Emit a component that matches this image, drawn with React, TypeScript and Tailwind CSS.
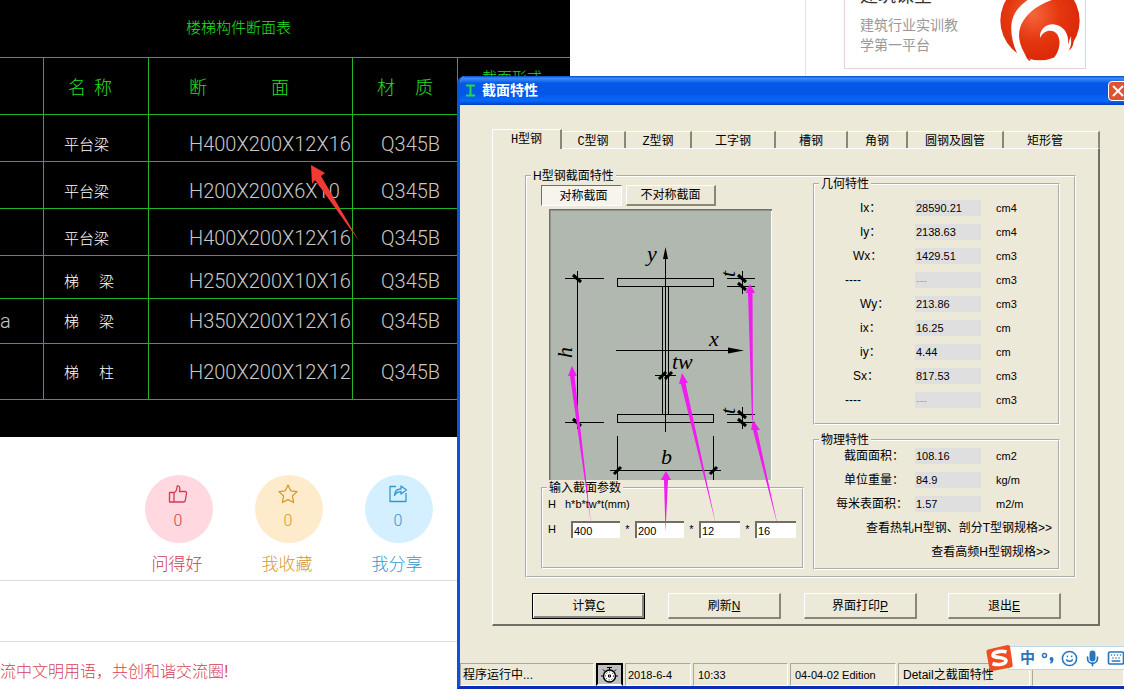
import React from "react";
import { Mic, Smile, Keyboard } from "lucide-react";

const sheetRows = [
  { mark: "", name: "平台梁", size: "H400X200X12X16", grade: "Q345B", cls: "h-[47px] align-bottom" },
  { mark: "", name: "平台梁", size: "H200X200X6X10", grade: "Q345B", cls: "h-[47px] align-bottom" },
  { mark: "", name: "平台梁", size: "H400X200X12X16", grade: "Q345B", cls: "h-[47px] align-bottom" },
  { mark: "", name: "梯 梁", size: "H250X200X10X16", grade: "Q345B", cls: "h-[43px] align-bottom" },
  { mark: "a", name: "梯 梁", size: "H350X200X12X16", grade: "Q345B", cls: "h-[45px] align-middle" },
  { mark: "", name: "梯 柱", size: "H200X200X12X12", grade: "Q345B", cls: "h-[56px] align-middle" },
];

function Sheet() {
  const line = "border-[#22b422]";
  return (
    <div className="relative h-[437px] w-[570px] overflow-hidden bg-black">
      <div className="pl-[186px] pt-3 font-['Noto_Sans_CJK_SC',sans-serif] text-[15px] font-light leading-[30px] text-[#22e022]">
        <div className="h-[45px]">楼梯构件断面表</div>
      </div>
      <table className={`w-full table-fixed border-separate border-spacing-0 border-t ${line}`}>
        <colgroup>
          <col className="w-[44px]" />
          <col className="w-[105px]" />
          <col className="w-[204px]" />
          <col className="w-[105px]" />
          <col />
        </colgroup>
        <thead className="font-['Noto_Sans_CJK_SC',sans-serif] text-[18px] text-[#22e022]">
          <tr>
            <th className={`h-[57px] border-b border-r ${line}`} />
            <th className={`border-b border-r pl-6 text-left font-light ${line}`}>
              <div className="flex gap-2"><span>名</span><span>称</span></div>
            </th>
            <th className={`border-b border-r pl-10 text-left font-light ${line}`}>
              <div className="flex gap-16"><span>断</span><span>面</span></div>
            </th>
            <th className={`border-b border-r pl-6 text-left font-light ${line}`}>
              <div className="flex gap-5"><span>材</span><span>质</span></div>
            </th>
            <th className={`border-b pl-6 pt-2 text-left align-top text-[15px] font-light ${line}`}>截面形式</th>
          </tr>
        </thead>
        <tbody className="font-[Roboto,'Noto_Sans_CJK_SC',sans-serif] text-[20px] font-light leading-[34px] text-[#c8c8c8]">
          {sheetRows.map((r, i) => (
            <tr key={i}>
              <td className={`border-b border-r ${line} ${r.cls}`}>{r.mark}</td>
              <td className={`whitespace-nowrap border-b border-r pl-5 font-['Noto_Sans_CJK_SC',sans-serif] text-[15px] text-white ${line} ${r.cls}`}>
                {r.name.includes(" ") ? (
                  <div className="flex gap-5">
                    <span>{r.name.split(" ")[0]}</span>
                    <span>{r.name.split(" ")[1]}</span>
                  </div>
                ) : (
                  r.name
                )}
              </td>
              <td className={`whitespace-nowrap border-b border-r pl-10 ${line} ${r.cls}`}>{r.size}</td>
              <td className={`border-b border-r pl-7 ${line} ${r.cls}`}>{r.grade}</td>
              <td className={r.cls} />
            </tr>
          ))}
        </tbody>
      </table>
      <svg className="absolute left-[300px] top-[155px]" width="70" height="90" viewBox="300 155 70 90" aria-hidden="true">
        <path d="M311 165 L325 173 L321 176 L359 241 L315 180 L312 184 Z" fill="#f23a35" />
      </svg>
    </div>
  );
}

function Reaction({ tone, disc, label, children }: { tone: string; disc: string; label: string; children: React.ReactNode }) {
  return (
    <button className={`flex flex-col items-center ${tone}`}>
      <span className={`flex h-[68px] w-[68px] flex-col items-center rounded-full pr-0.5 pt-2 ${disc}`}>
        {children}
        <span className="mt-1 font-[Roboto,sans-serif] text-[16px] font-light leading-6">0</span>
      </span>
      <span className="mt-3 pr-1 text-[17px] font-light leading-5">{label}</span>
    </button>
  );
}

function PageBehind() {
  return (
    <div className="flex items-start">
      <main className="w-[805px] shrink-0">
        <Sheet />
        <div className="flex gap-[42px] border-b border-[#dddddd] pb-[5px] pl-[145px] pt-[38px]">
          <Reaction tone="text-[#d23a55]" disc="bg-[#ffd9df]" label="问得好">
            <svg width="20" height="22" viewBox="0 0 20 22" fill="none" stroke="currentColor" strokeWidth="1.3" strokeLinejoin="round">
              <path d="M1.500 9.500h4.500v9.500H1.500zM6 10c2.300-1.500 3-3.500 3.200-7 2.200-.5 3.300 1.500 2.200 5.500h5.600c1.200 0 1.700.8 1.500 2l-1.200 7c-.3 1-.8 1.500-1.800 1.500H6" />
            </svg>
          </Reaction>
          <Reaction tone="text-[#d8992c]" disc="bg-[#feebcb]" label="我收藏">
            <svg width="20" height="22" viewBox="0 0 20 22" fill="none" stroke="currentColor" strokeWidth="1.3" strokeLinejoin="round">
              <path d="M10 2l2.700 5.800 6.300.8-4.600 4.400 1.200 6.500L10 16.700 4.400 19.500l1.200-6.500L1 8.600l6.300-.8z" />
            </svg>
          </Reaction>
          <Reaction tone="text-[#3596d0]" disc="bg-[#d4efff]" label="我分享">
            <svg width="20" height="22" viewBox="0 0 20 22" fill="none" stroke="currentColor" strokeWidth="1.3" strokeLinejoin="round">
              <path d="M8 3.500H2v15h16V10M6.500 12.500c.2-4 2.500-6.500 6.500-6.500V3l5.500 4L13 11V8.600c-3 0-5 1.200-6.500 3.900z" />
            </svg>
          </Reaction>
        </div>
        <div className="h-[61px] border-b border-[#dddddd]" />
        <p className="pt-[18px] text-[16px] font-light leading-6 text-[#d6415a]">流中文明用语，共创和谐交流圈!</p>
      </main>
      <aside className="border-l border-[#e4e4e4] pb-2 pl-[38px]">
        <div className="flex h-[69px] w-[242px] justify-between border border-t-0 border-[#e6d3d6] pl-[15px] pr-1">
          <div>
            <h2 className="-mt-4 text-[18px] leading-6 text-[#333333]">建筑课堂</h2>
            <p className="mt-[7px] w-[105px] text-[14px] leading-5 text-[#999999]">建筑行业实训教学第一平台</p>
          </div>
          <svg className="-mt-5 shrink-0" width="82" height="82" viewBox="479 -60 246 246" aria-hidden="true">
            <defs>
              <radialGradient id="ball" cx="0.42" cy="0.42" r="0.55">
                <stop offset="0" stopColor="#f4663c" />
                <stop offset="0.6" stopColor="#e5370f" />
                <stop offset="1" stopColor="#dd2a0b" />
              </radialGradient>
            </defs>
            <circle cx="602" cy="62" r="119" fill="url(#ball)" />
            <path d="M660 -45 C600 -30 560 0 540 22 C512 50 506 100 534 162 L552 186 L572 184 C536 138 530 96 552 62 C574 28 610 8 655 -6 C680 -14 690 -20 700 -12Z" fill="#fff" />
            <path d="M602 114 C600 88 620 72 642 73 C672 76 690 100 686 134 L694 108 L704 128 L712 130 L690 186 L630 186 C658 166 668 130 655 105 C645 88 614 86 602 114Z" fill="#fff" />
            <path d="M692 106 C698 124 696 138 688 152 C698 146 702 136 703 124 Z M558 158 C562 168 568 176 576 180 L569 182 C562 175 558 168 558 158Z" fill="#dd2b10" />
          </svg>
        </div>
      </aside>
    </div>
  );
}

const tabs = [
  { label: "H型钢", cls: "h-5 w-[70px] -mb-px bg-[#ece9d8] border-l relative" },
  { label: "C型钢", cls: "h-[17px] w-[64px] pt-0.5" },
  { label: "Z型钢", cls: "h-[17px] w-[66px] pt-0.5" },
  { label: "工字钢", cls: "h-[17px] w-[84px] pt-0.5" },
  { label: "槽钢", cls: "h-[17px] w-[72px] pt-0.5" },
  { label: "角钢", cls: "h-[17px] w-[60px] pt-0.5" },
  { label: "圆钢及圆管", cls: "h-[17px] w-[96px] pt-0.5" },
  { label: "矩形管", cls: "h-[17px] w-[96px] pt-0.5 pr-3" },
];

const geometry = [
  { label: "Ix：", value: "28590.21", unit: "cm4", pad: "pl-[45px]" },
  { label: "Iy：", value: "2138.63", unit: "cm4", pad: "pl-[45px]" },
  { label: "Wx：", value: "1429.51", unit: "cm3", pad: "pl-[38px]" },
  { label: "----", value: "---", unit: "cm3", pad: "pl-[30px]" },
  { label: "Wy：", value: "213.86", unit: "cm3", pad: "pl-[45px]" },
  { label: "ix：", value: "16.25", unit: "cm", pad: "pl-[45px]" },
  { label: "iy：", value: "4.44", unit: "cm", pad: "pl-[45px]" },
  { label: "Sx：", value: "817.53", unit: "cm3", pad: "pl-[38px]" },
  { label: "----", value: "---", unit: "cm3", pad: "pl-[30px]" },
];

const physics = [
  { label: "截面面积：", value: "108.16", unit: "cm2", pad: "pl-[29px]" },
  { label: "单位重量：", value: "84.9", unit: "kg/m", pad: "pl-[29px]" },
  { label: "每米表面积：", value: "1.57", unit: "m2/m", pad: "pl-[21px]" },
];

type Row = { label: string; value: string; unit: string; pad: string };

function Readout({ row, id }: { row: Row; id: string }) {
  return (
    <div className="flex h-6 items-center">
      <label htmlFor={id} className={`w-[100px] shrink-0 whitespace-nowrap ${row.pad}`}>{row.label}</label>
      <input
        id={id}
        readOnly
        value={row.value}
        className={`h-4 w-[66px] bg-[#e0dfe0] pl-px text-[11px] leading-4 outline-none ${row.value === "---" ? "text-[#a5a5a5]" : "text-black"}`}
      />
      <span className="pl-[15px] text-[11px]">{row.unit}</span>
    </div>
  );
}

const group = "min-w-0 border-2 border-white [border-style:groove]";
const legend = "ml-1 px-0.5 leading-[14px]";
const raised = "border-l border-t border-r-2 border-b-2 border-l-white border-t-white border-r-[#8a8778] border-b-[#8a8778]";

function Diagram() {
  return (
    <svg className="ml-2 mt-[3px] block h-[271px] w-[223px]" viewBox="549 209 223 271" role="img" aria-label="H型钢截面">
      <rect x="549" y="209" width="223" height="271" fill="#b0b8b0" />
      <path d="M549.5 480V210M549 209.500H772" stroke="#6f7169" strokeWidth="2" fill="none" />
      <path d="M771.500 211V480" stroke="#fff" fill="none" />
      <g stroke="#000" strokeWidth="1" fill="none" shapeRendering="crispEdges">
        <rect x="617.5" y="278.5" width="96" height="8" />
        <rect x="617.5" y="414.5" width="96" height="8" />
        <path d="M662.500 286V414M668.500 286V414M665.500 250V432" />
        <path d="M616 350.500H735M565 278.500H604M565 422.500H604M577.500 271V429" />
        <path d="M727 278.500H755M727 286.500H755M742.500 271V294M727 414.500H755M727 422.500H755M742.500 407V429" />
        <path d="M655 375.500H676M617.500 436V480M713.500 436V480M610 470.500H721" />
      </g>
      <path d="M665.500 247L668 259H663ZM744 350.500L728 347.500V353.500Z" />
      <path
        d="M573 275l8 7M573 419l8 7M738 275l8 7M738 283l8 7M738 411l8 7M738 419l8 7M659 379l7-7M665 379l7-7M614 474l7-7M710 474l7-7"
        stroke="#000"
        strokeWidth="3"
      />
      <g className="font-['Liberation_Serif',serif] text-[22px] italic">
        <text x="647" y="261">y</text>
        <text x="709" y="346">x</text>
        <text x="672" y="369">tw</text>
        <text x="661" y="464">b</text>
        <text transform="translate(572 358) rotate(-90)">h</text>
        <text transform="translate(735 277) rotate(-90)">t</text>
        <text transform="translate(735 414) rotate(-90)">t</text>
      </g>
    </svg>
  );
}

function Pointers() {
  return (
    <svg className="pointer-events-none absolute left-0 top-0" width="263" height="384" viewBox="541 185 263 384" aria-hidden="true">
      <g fill="#f01cf0">
        <path d="M572 366L577 376H574.500L591 524L570 376H568Z" />
        <path d="M666 471L671 480H668L665.500 532L664 480H661Z" />
        <path d="M682 373L688 383H685.500L716 525L681 384H679Z" />
        <path d="M750 284L755 293H752.500L753 420H752L748 293H745.500Z" />
        <path d="M753 420L760 430H757L778 527L753 430H751Z" />
      </g>
    </svg>
  );
}

const sizeFields = [
  { name: "h", value: "400", cls: "w-[49px]" },
  { name: "b", value: "200", cls: "w-[49px]" },
  { name: "tw", value: "12", cls: "w-[41px]" },
  { name: "t", value: "16", cls: "w-[41px]" },
];

function Tool({ text, hot, cls }: { text: string; hot: string; cls: string }) {
  return (
    <button className={`h-[26px] w-[113px] ${cls}`}>
      {text}
      <span className="underline">{hot}</span>
    </button>
  );
}

function Dialog() {
  const cell = "h-[23px] shrink-0 whitespace-nowrap border border-b-white border-l-[#aca899] border-r-white border-t-[#aca899] leading-[22px]";
  return (
    <section
      role="dialog"
      aria-label="截面特性"
      className="absolute left-[457px] right-0 top-[76px] overflow-hidden rounded-tl-lg border-b-[3px] border-l-[3px] border-b-[#0a2fb5] border-l-[#0a53dd] bg-[#ece9d8] text-[12px] text-black"
    >
      <header className="-ml-[3px] flex h-[29px] items-center bg-[linear-gradient(#0a48c8,#3c8cf8_8%,#0458e8_25%,#0456e6_60%,#0668fc_85%,#0340c0)] pl-2">
        <svg width="11" height="13" viewBox="0 0 11 13" fill="none" stroke="#16e04c" strokeWidth="2" aria-hidden="true">
          <path d="M1 1.500H10M1 11.500H10M5.500 1V12" />
        </svg>
        <h1 className="ml-1.5 flex-1 text-[14px] font-bold text-white">截面特性</h1>
        <button aria-label="关闭" className="-mr-1 flex h-5 w-5 items-center justify-center rounded-sm border border-white bg-[#dd5230]">
          <svg width="12" height="12" viewBox="0 0 12 12" stroke="#fff" strokeWidth="2"><path d="M1 1L11 11M11 1L1 11" /></svg>
        </button>
      </header>

      <div className="pl-8 pr-6 pt-6">
        <div role="tablist" className="flex items-end font-['Liberation_Mono','Noto_Sans_CJK_SC',monospace]">
          {tabs.map((t, i) => (
            <button
              key={t.label}
              role="tab"
              aria-selected={i === 0}
              className={`box-border whitespace-nowrap border-r-2 border-t border-r-[#8a8778] border-l-white border-t-white leading-4 ${t.cls}`}
            >
              {t.label}
            </button>
          ))}
        </div>

        <div role="tabpanel" className="border-b-2 border-l border-r-2 border-t border-b-[#716f64] border-l-white border-r-[#716f64] border-t-white pb-[5px] pl-8 pr-[22px] pt-5">
          <fieldset className={`${group} pb-1.5`}>
            <legend className={legend}>H型钢截面特性</legend>
            <div className="flex gap-[9px] px-3.5">
              <div className="relative mt-0.5 w-[263px] shrink-0">
                <div className="flex gap-1">
                  <button aria-pressed="true" className="h-[21px] w-[81px] border border-b-white border-l-[#716f64] border-r-white border-t-[#716f64] bg-[#f6f4ec] pl-1">对称截面</button>
                  <button aria-pressed="false" className={`h-[21px] w-[90px] ${raised}`}>不对称截面</button>
                </div>
                <Diagram />
                <fieldset className={`${group} mt-px h-[88px]`}>
                  <legend className={legend}>输入截面参数</legend>
                  <div className="flex h-[18px] items-center pl-[5px] text-[11px]">
                    <span className="w-[17px]">H</span>
                    <span>h*b*tw*t(mm)</span>
                  </div>
                  <div className="mt-2 flex items-center pl-[5px] text-[11px]">
                    <span className="w-[23px]">H</span>
                    {sizeFields.map((f, i) => (
                      <React.Fragment key={f.name}>
                        {i > 0 && <span className="w-[15px] text-center">*</span>}
                        <input
                          aria-label={f.name}
                          defaultValue={f.value}
                          className={`h-[17px] border-l-2 border-t-2 border-l-[#716f64] border-t-[#716f64] bg-white pl-px leading-[15px] outline-none ${f.cls}`}
                        />
                      </React.Fragment>
                    ))}
                  </div>
                </fieldset>
                <Pointers />
              </div>

              <div className="-mt-1.5 min-w-0 flex-1">
                <fieldset className={`${group} pb-[11px]`}>
                  <legend className={legend}>几何特性</legend>
                  <div className="pt-[5px]">
                    {geometry.map((r, i) => <Readout key={i} row={r} id={`geo${i}`} />)}
                  </div>
                </fieldset>
                <fieldset className={`${group} mt-2 pb-1`}>
                  <legend className={legend}>物理特性</legend>
                  <div className="-mt-[3px]">
                    {physics.map((r, i) => <Readout key={i} row={r} id={`phy${i}`} />)}
                    <div className="flex h-6 items-center justify-end whitespace-nowrap pr-1.5"><a href="#hot">查看热轧H型钢、剖分T型钢规格&gt;&gt;</a></div>
                    <div className="flex h-6 items-center justify-end whitespace-nowrap pr-2"><a href="#hf">查看高频H型钢规格&gt;&gt;</a></div>
                  </div>
                </fieldset>
              </div>
            </div>
          </fieldset>
          <div className="mt-[15px] flex gap-[23px] pl-[7px]">
            <Tool text="计算" hot="C" cls="border border-black shadow-[inset_1px_1px_#fff,inset_-2px_-2px_#8a8778]" />
            <Tool text="刷新" hot="N" cls={raised} />
            <Tool text="界面打印" hot="P" cls={raised} />
            <Tool text="退出" hot="E" cls={`ml-2 ${raised}`} />
          </div>
        </div>
      </div>

      <footer className="mt-[37px] flex gap-0.5">
        <div className={`w-[134px] pl-0.5 ${cell}`}>程序运行中...</div>
        <div className="flex h-[23px] w-[27px] shrink-0 items-center justify-center border-2 border-b-white border-l-black border-r-black border-t-black bg-[#c0c0c0]">
          <svg width="17" height="18" viewBox="0 0 17 18" fill="none" stroke="#000" aria-hidden="true">
            <circle cx="8.5" cy="10" r="6" fill="#fff" strokeWidth="1.5" />
            <circle cx="8.5" cy="10" r="4" strokeDasharray="1 2" />
            <path d="M6 1.500H11M8.500 1V4M2 3.500L4 5.500M15 3.500L13 5.500M0 10H2.500M14.500 10H17M7.500 9h2v2h-2z" />
          </svg>
        </div>
        <div className={`w-[66px] pl-0.5 text-[11px] ${cell}`}>2018-6-4</div>
        <div className={`w-[95px] pl-1 text-[11px] ${cell}`}>10:33</div>
        <div className={`w-[106px] pl-1 text-[11px] ${cell}`}>04-04-02 Edition</div>
        <div className={`w-[132px] pl-1 ${cell}`}>Detail之截面特性</div>
        <div className={`flex-1 ${cell}`} />
      </footer>
    </section>
  );
}

function InputBar() {
  return (
    <div className="absolute right-0 top-[644px] flex items-center text-[#2a76bd]">
      <svg className="relative z-10 -mr-1.5" width="29" height="28" viewBox="0 0 29 28" aria-hidden="true">
        <path d="M3 5.500Q1 6 1.400 8L4.500 25Q5 27.300 7 27L26 23.500Q28 23 27.700 21L25 2.500Q24.600.6 22.500 1Z" fill="#ee4e22" />
        <path d="M21.500 8C17 6.500 8.500 7.500 8 11C7.800 14.500 20.500 12.500 21 16.500C21 20.500 12.500 21.500 7.500 19.500" fill="none" stroke="#fff" strokeWidth="3.600" />
      </svg>
      <div className="flex h-6 w-[116px] items-center gap-1.5 border border-r-0 border-[#c3d6e6] bg-white pl-[11px] text-[15px] font-bold">
        <span className="leading-5">中</span>
        <svg width="14" height="14" viewBox="0 0 14 14" fill="none" stroke="currentColor" strokeWidth="1.500" className="shrink-0">
          <circle cx="3.5" cy="4.500" r="2" />
          <circle cx="10.500" cy="8" r="1.200" fill="currentColor" />
          <path d="M11.500 8c.3 2-.5 3.300-2.200 4" strokeWidth="1.600" />
        </svg>
        <Smile size={17} strokeWidth={2.2} className="shrink-0" />
        <Mic size={17} strokeWidth={2.4} className="shrink-0 [&>rect]:fill-current" />
        <Keyboard size={18} strokeWidth={2.2} className="shrink-0" />
      </div>
    </div>
  );
}

export default function App() {
  return (
    <div className="relative min-h-screen overflow-hidden bg-white font-['Liberation_Sans','Noto_Sans_CJK_SC',sans-serif]">
      <PageBehind />
      <Dialog />
      <InputBar />
    </div>
  );
}
